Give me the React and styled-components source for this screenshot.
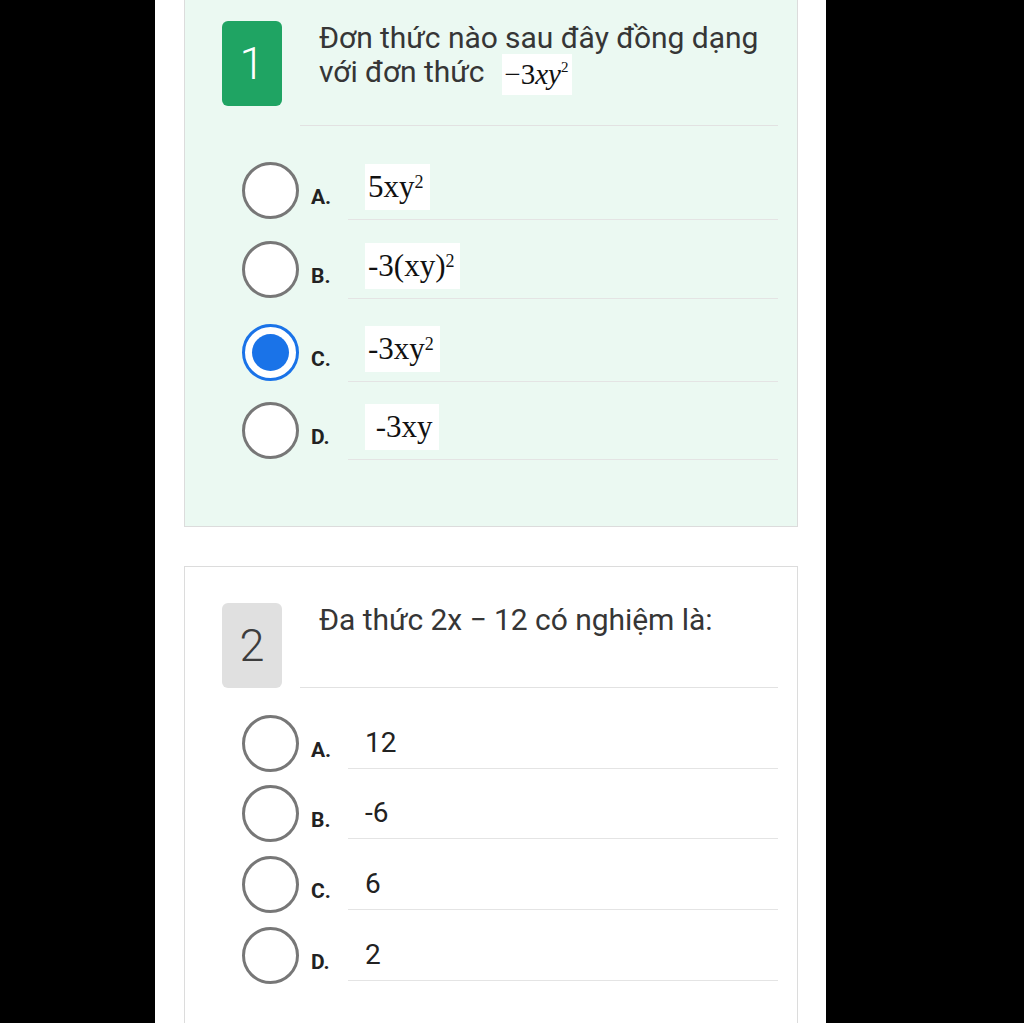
import React from "react";
import styled, { createGlobalStyle } from "styled-components";

const Global = createGlobalStyle`
  html, body { margin: 0; padding: 0; background: #000; }
  body { font-family: Roboto, "Noto Sans", Arial, sans-serif; }
`;

const Page = styled.div`
  width: 1024px;
  height: 1023px;
  overflow: hidden;
  background: #000;
`;

const Column = styled.main`
  margin-left: 155px;
  width: 671px;
  height: 1023px;
  background: #fff;
  padding: 0 28px 0 29px;
  box-sizing: border-box;
  display: flex;
  flex-direction: column;
  gap: 39px;
`;

const Card = styled.section`
  background: ${(p) => (p.$active ? "#ebf9f2" : "#fff")};
  border: 1px solid #dcdcdc;
  border-top: ${(p) => (p.$cutTop ? "none" : "1px solid #dcdcdc")};
  padding: ${(p) => p.$padTop}px 19px ${(p) => p.$padBottom}px 37px;
  flex-shrink: 0;
`;

const Header = styled.div`
  display: flex;
  align-items: flex-start;
`;

const Badge = styled.div`
  width: 60px;
  height: 85px;
  border-radius: 6px;
  flex-shrink: 0;
  display: flex;
  align-items: center;
  justify-content: center;
  background: ${(p) => (p.$active ? "#1fa463" : "#e0e0e0")};
  color: ${(p) => (p.$active ? "#fff" : "#3d3d3d")};
  font-size: 45px;
  font-weight: 300;
`;

const QuestionText = styled.div`
  flex: 1;
  margin-left: 18px;
  min-height: 85px;
  box-sizing: border-box;
  padding: 0 0 ${(p) => p.$padBottom}px 19px;
  border-bottom: 1px solid #e2e2e2;
  color: #363636;
  font-size: 30px;
  line-height: 33px;
  letter-spacing: -0.05px;
`;

const InlineMath = styled.span`
  display: inline-block;
  vertical-align: middle;
  margin-left: 18px;
  background: #fff;
  padding: 2px 4px 3px 2px;
  font-family: "Liberation Serif", "Times New Roman", serif;
  font-size: 29px;
  line-height: 36px;
  letter-spacing: 0;
  color: #111;
  i { font-style: italic; }
  sup { font-size: 15px; vertical-align: 12px; line-height: 0; font-style: normal; }
`;

const Options = styled.div`
  display: flex;
  flex-direction: column;
`;

const Row = styled.label`
  display: flex;
  align-items: flex-end;
  height: ${(p) => p.$h}px;
`;

const Radio = styled.span`
  width: 57px;
  height: 57px;
  box-sizing: border-box;
  border-radius: 50%;
  flex-shrink: 0;
  margin-left: 20px;
  margin-bottom: ${(p) => p.$mb}px;
  background: #fff;
  border: ${(p) => (p.$checked ? "3.5px solid #1a73e8" : "3px solid #777")};
  display: flex;
  align-items: center;
  justify-content: center;
  &::after {
    content: "";
    display: ${(p) => (p.$checked ? "block" : "none")};
    width: 37px;
    height: 37px;
    border-radius: 50%;
    background: #1a73e8;
  }
`;

const Letter = styled.span`
  width: 37px;
  margin-left: 12px;
  flex-shrink: 0;
  font-size: 21px;
  line-height: 21px;
  font-weight: 700;
  color: #222;
  padding-bottom: ${(p) => p.$pb}px;
`;

const Answer = styled.div`
  flex: 1;
  height: 100%;
  box-sizing: border-box;
  border-bottom: 1px solid #e4e4e4;
  display: flex;
  align-items: flex-end;
  padding-left: 17px;
  padding-bottom: ${(p) => p.$pb}px;
`;

const MathBox = styled.span`
  display: inline-block;
  background: #fff;
  padding: 3px 6px 3px 3px;
  font-family: "Liberation Serif", "Times New Roman", serif;
  font-size: 31px;
  line-height: 40px;
  color: #111;
  sup { font-size: 18px; vertical-align: 9px; line-height: 0; }
`;

const PlainAnswer = styled.span`
  font-size: 28px;
  line-height: 28px;
  color: #222;
`;

const q1 = [
  { l: "A.", v: <>5xy<sup>2</sup></> },
  { l: "B.", v: <>-3(xy)<sup>2</sup></> },
  { l: "C.", v: <>-3xy<sup>2</sup></>, checked: true },
  { l: "D.", v: <>&nbsp;-3xy</> },
];
const q1Heights = [94, 79, 83, 78];

const q2 = [
  { l: "A.", v: "12" },
  { l: "B.", v: "-6" },
  { l: "C.", v: "6" },
  { l: "D.", v: "2" },
];
const q2Heights = [81, 70, 71, 71];

export default function App() {
  return (
    <Page>
      <Global />
      <Column>
        <Card $active $cutTop $padTop={21} $padBottom={66}>
          <Header>
            <Badge $active>1</Badge>
            <QuestionText $padBottom={30}>
              Đơn thức nào sau đây đồng dạng
              <br />
              với đơn thức
              <InlineMath>
                −3<i>xy</i>
                <sup>2</sup>
              </InlineMath>
            </QuestionText>
          </Header>
          <Options>
            {q1.map((o, i) => (
              <Row key={o.l} $h={q1Heights[i]}>
                <Radio $checked={o.checked} $mb={1} />
                <Letter $pb={12}>{o.l}</Letter>
                <Answer $pb={9}>
                  <MathBox>{o.v}</MathBox>
                </Answer>
              </Row>
            ))}
          </Options>
        </Card>
        <Card $padTop={36} $padBottom={80}>
          <Header>
            <Badge>2</Badge>
            <QuestionText $padBottom={0}>Đa thức 2x − 12 có nghiệm là:</QuestionText>
          </Header>
          <Options>
            {q2.map((o, i) => (
              <Row key={o.l} $h={q2Heights[i]}>
                <Radio $mb={-3} />
                <Letter $pb={8}>{o.l}</Letter>
                <Answer $pb={11}>
                  <PlainAnswer>{o.v}</PlainAnswer>
                </Answer>
              </Row>
            ))}
          </Options>
        </Card>
      </Column>
    </Page>
  );
}
